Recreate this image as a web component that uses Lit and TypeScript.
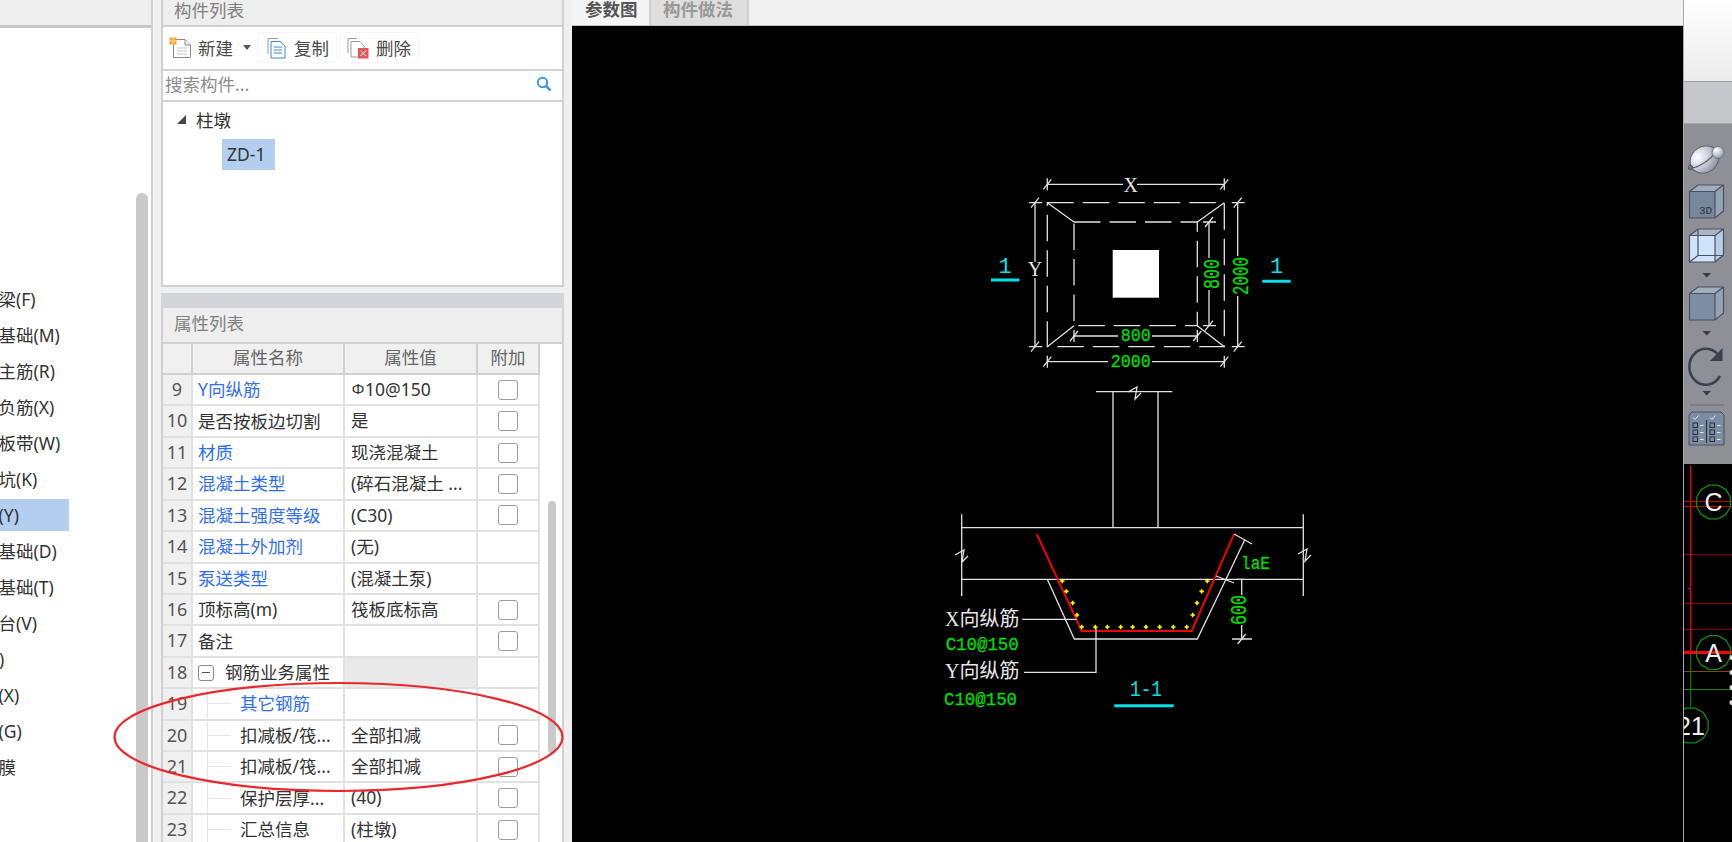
import { LitElement, html, css, svg } from 'lit';
import { customElement } from 'lit/decorators.js';

const FAMILY = css`"Noto Sans", "Noto Sans CJK SC", sans-serif`;

const categories = [
  '基础梁(F)', '筏板基础(M)', '筏板主筋(R)', '筏板负筋(X)', '基础板带(W)', '集水坑(K)', '柱墩(Y)',
  '独立基础(D)', '条形基础(T)', '桩承台(V)', '桩(U)', '垫层(X)', '地沟(G)', '砖胎膜',
];

interface Row {
  n: number;
  name: string;
  value?: string;
  symbol?: string;
  link?: boolean;
  check?: boolean;
  child?: boolean;
  group?: boolean;
}

const rows: Row[] = [
  { n: 9, name: 'Y向纵筋', symbol: 'Φ', value: '10@150', link: true, check: true },
  { n: 10, name: '是否按板边切割', value: '是', check: true },
  { n: 11, name: '材质', value: '现浇混凝土', link: true, check: true },
  { n: 12, name: '混凝土类型', value: '(碎石混凝土 ...', link: true, check: true },
  { n: 13, name: '混凝土强度等级', value: '(C30)', link: true, check: true },
  { n: 14, name: '混凝土外加剂', value: '(无)', link: true },
  { n: 15, name: '泵送类型', value: '(混凝土泵)', link: true },
  { n: 16, name: '顶标高(m)', value: '筏板底标高', check: true },
  { n: 17, name: '备注', check: true },
  { n: 18, name: '钢筋业务属性', group: true },
  { n: 19, name: '其它钢筋', link: true, child: true },
  { n: 20, name: '扣减板/筏...', value: '全部扣减', child: true, check: true },
  { n: 21, name: '扣减板/筏...', value: '全部扣减', child: true, check: true },
  { n: 22, name: '保护层厚...', value: '(40)', child: true, check: true },
  { n: 23, name: '汇总信息', value: '(柱墩)', child: true, check: true },
];

// short CAD slash tick
const tick = (x: number, y: number) => svg`<line class="w" x1=${x - 4} y1=${y + 5} x2=${x + 4} y2=${y - 5} />`;

// horizontal dimension, gap leaves room for the label
const hDim = (x1: number, x2: number, y: number, g1: number, g2: number) => svg`
  <path class="w" d="M${x1} ${y}H${g1}M${g2} ${y}H${x2}M${x1} ${y - 6}V${y + 6}M${x2} ${y - 6}V${y + 6}" />
  ${tick(x1, y)}${tick(x2, y)}`;

const vDim = (x: number, y1: number, y2: number, g1: number, g2: number) => svg`
  <path class="w" d="M${x} ${y1}V${g1}M${x} ${g2}V${y2}M${x - 6} ${y1}H${x + 7}M${x - 6} ${y2}H${x + 7}" />
  ${tick(x, y1)}${tick(x, y2)}`;

const breakMark = (x: number, y: number) => svg`
  <path class="w" d="M${x - 6} ${y + 1}L${x + 3} ${y - 4}L${x + 1} ${y + 8}L${x + 7} ${y + 2}" />`;

const dots: [number, number][] = [
  [427, 603], [439, 634], [458, 669], [471, 705], [485, 741], [526, 741], [562, 741], [602, 741], [638, 741],
  [678, 741], [719, 741], [760, 741], [800, 741], [818, 705], [831, 669], [845, 634], [862, 603],
];

@customElement('cad-drawing')
export class CadDrawing extends LitElement {
  static styles = css`
    :host {
      display: block;
      flex: 1;
      min-height: 0;
      background: #000;
    }
    svg {
      display: block;
    }
    .w {
      stroke: #e2e2e2;
      stroke-width: 1.3;
      fill: none;
    }
    .dash {
      stroke-dasharray: 26.5 9;
    }
    .cyan-line {
      stroke: #00e1e8;
      stroke-width: 3;
    }
    text {
      font-family: "Liberation Mono", "Noto Sans CJK SC", monospace;
      font-size: 19px;
      text-anchor: middle;
      dominant-baseline: central;
    }
    .g {
      fill: #00dd00;
      stroke: #00dd00;
      stroke-width: 0.3;
    }
    .t {
      fill: #e6e6e6;
      font-family: "Liberation Serif", serif;
      font-size: 20px;
    }
    .c {
      fill: #00e1e8;
      font-size: 22px;
    }
    .label {
      fill: #e6e6e6;
      font-family: "Liberation Serif", "Noto Sans CJK SC", serif;
      font-size: 20px;
      text-anchor: start;
    }
    .start {
      text-anchor: start;
    }
  `;

  render() {
    return html`
      <svg width="1111" height="816" viewBox="572 26 1111 816">
        <!-- plan -->
        <rect class="w dash" x="1047.3" y="202.7" width="177" height="144" />
        <rect class="w dash" x="1074" y="222" width="123.3" height="103.7" />
        <path class="w" d="M1047.3 202.7L1074 222M1224.3 202.7L1197.3 222M1047.3 346.7L1074 325.7M1224.3 346.7L1197.3 325.7" />
        <rect x="1112.7" y="250" width="46.3" height="47.7" fill="#fff" />
        ${hDim(1047.3, 1224.3, 184.3, 1123, 1137)}
        ${hDim(1047.3, 1224.3, 361.7, 1108, 1152)}
        ${hDim(1074, 1197.3, 336, 1118, 1152)}
        ${vDim(1035, 202.7, 346.7, 262, 278)}
        ${vDim(1237.7, 202.7, 346.7, 256, 296)}
        ${vDim(1209, 222, 325.7, 258, 290)}
        <text class="t" x="1130.7" y="184.5">X</text>
        <text class="t" x="1035" y="269">Y</text>
        <text class="g" x="1130.7" y="361.5" textLength="40" lengthAdjust="spacingAndGlyphs">2000</text>
        <text class="g" x="1135.7" y="336" textLength="30" lengthAdjust="spacingAndGlyphs">800</text>
        <text class="g" transform="translate(1241.7 276) rotate(-90) scale(1 1.2)" textLength="38" lengthAdjust="spacingAndGlyphs">2000</text>
        <text class="g" transform="translate(1212.7 274) rotate(-90) scale(1 1.2)" textLength="30" lengthAdjust="spacingAndGlyphs">800</text>
        <text class="c" x="1005" y="267">1</text>
        <text class="c" x="1276.7" y="267">1</text>
        <path class="cyan-line" d="M991 280H1019.3M1262.3 281.3H1290.7" />

        <!-- section 1-1 -->
        <path class="w" d="M1096 391.7H1172.3M1113 391.7V527.7M1158 391.7V527.7" />
        ${breakMark(1134, 391)}
        <path class="w" d="M961.7 527.7H1303.3M961.7 579.3H1303.3M961.7 514.3V596M1303.3 514.3V596" />
        ${breakMark(961, 554)}${breakMark(1304, 553)}
        <path class="w" d="M1047.3 579.3L1074.3 639H1197.3L1226 579.3" />
        <path d="M1036.7 534L1081.7 631H1191.7L1234 534" stroke="#f00000" stroke-width="2" fill="none" />
        ${dots.map(([x, y]) => svg`<path d="M${920 + x / 3 - 2.2} ${380 + y / 3}H${920 + x / 3 + 2.2}M${920 + x / 3} ${380 + y / 3 - 2.2}V${380 + y / 3 + 2.2}" stroke="#ffff00" stroke-width="1.6" />`)}
        <path class="w" d="M1245 539.3L1226 579.3M1234 534L1252 544M1216 576L1234 583" />
        <path class="w" d="M1241.7 579.3V595M1241.7 625V639M1232 639H1252M1236 579.3H1244" />
        ${tick(1241.7, 639)}
        <text class="g start" x="1241" y="563.5" textLength="29" lengthAdjust="spacingAndGlyphs">laE</text>
        <text class="g" transform="translate(1240 610) rotate(-90) scale(1 1.2)" textLength="30" lengthAdjust="spacingAndGlyphs">600</text>
        <path class="w" d="M1022.3 619.3H1076.7M1024 672.3H1096V628" />
        <text class="label" x="945" y="619.3">X向纵筋</text>
        <text class="g start" x="945.7" y="645" textLength="73" lengthAdjust="spacingAndGlyphs">C10@150</text>
        <text class="label" x="945" y="670.7">Y向纵筋</text>
        <text class="g start" x="944" y="700" textLength="73" lengthAdjust="spacingAndGlyphs">C10@150</text>
        <text class="c" x="1146" y="690.7" textLength="32" lengthAdjust="spacingAndGlyphs">1-1</text>
        <path class="cyan-line" d="M1114.3 705.7H1173.7" />
      </svg>
    `;
  }
}

const hexagon = (cx: number, cy: number, r: number) => {
  const pts = Array.from({ length: 12 }, (_, i) => {
    const a = (Math.PI / 6) * i + Math.PI / 12;
    return `${(cx + r * Math.cos(a)).toFixed(1)},${(cy + r * Math.sin(a)).toFixed(1)}`;
  });
  return svg`<polygon points=${pts.join(' ')} fill="none" stroke="#0b8a0b" stroke-width="1.3" />`;
};

const cube = (y: number, front: string, top: string, side: string) => svg`
  <path d="M1689.5 ${y + 6.5}L1698 ${y}H1723.5L1715 ${y + 6.5}Z" fill=${top} />
  <path d="M1715 ${y + 6.5}L1723.5 ${y}V${y + 26}L1715 ${y + 33}Z" fill=${side} />
  <rect x="1689.5" y=${y + 6.5} width="25.5" height="26.5" fill=${front} />
  <path d="M1689.5 ${y + 6.5}L1698 ${y}H1723.5V${y + 26}L1715 ${y + 33}H1689.5ZM1689.5 ${y + 6.5}H1715V${y + 33}M1715 ${y + 6.5}L1723.5 ${y}"
    fill="none" stroke="#465263" stroke-width="1.2" />`;

const drop = (y: number) => svg`<path d="M1702.5 ${y - 2}H1711L1706.7 ${y + 2.5}Z" fill="#343c49" />`;

const checkColumn = (x: number) => svg`
  <path d="M${x} 416.5l2 2 3.5-4" fill="none" stroke="#e6ebf2" stroke-width="1" />
  ${[422, 429, 436].map(
    (y) => svg`<rect x=${x} y=${y} width="4.5" height="4.5" fill="none" stroke="#2c3442" /><path d="M${x + 7} ${y + 2.5}h3.5" stroke="#e6ebf2" />`
  )}`;

@customElement('side-strip')
export class SideStrip extends LitElement {
  static styles = css`
    :host {
      display: flex;
      flex-direction: column;
      width: 49px;
      flex: none;
      border-left: 1px solid #a9a9a9;
      box-sizing: border-box;
    }
    .top {
      height: 82px;
      box-sizing: border-box;
      background: linear-gradient(#fff, #ececec);
      border-bottom: 1px solid #9b9b9b;
    }
    .band {
      height: 41px;
      background: #c7c8cc;
    }
    .tools {
      height: 341px;
      background: #8f9095;
      border-top: 1px solid #a9aaae;
      box-sizing: border-box;
    }
    .view {
      flex: 1;
      min-height: 0;
      background: #000;
    }
    svg {
      display: block;
    }
    .label {
      fill: #f2f2f2;
      font-family: "Liberation Sans", sans-serif;
      font-size: 25px;
      text-anchor: middle;
      dominant-baseline: central;
    }
  `;

  render() {
    return html`
      <div class="top"></div>
      <div class="band"></div>
      <div class="tools">
        <svg width="48" height="340" viewBox="1684 123 48 340">
          <defs>
            <radialGradient id="ball" cx="0.35" cy="0.28" r="0.85">
              <stop offset="0" stop-color="#fff" />
              <stop offset="0.5" stop-color="#c5cad2" />
              <stop offset="1" stop-color="#7a828e" />
            </radialGradient>
          </defs>
          <ellipse cx="1704.5" cy="158.5" rx="15" ry="13" transform="rotate(-35 1704.5 158.5)" fill="url(#ball)" stroke="#5d6571" />
          <path d="M1689 167C1697 168 1712 158 1715 151" fill="none" stroke="#5d6571" stroke-width="1.3" />
          <circle cx="1718" cy="151.5" r="6" fill="url(#ball)" stroke="#6b737f" />
          <circle cx="1690.5" cy="166.5" r="2.2" fill="none" stroke="#4d5562" />
          ${cube(184, '#77879c', '#a3aebd', '#95a3b5')}
          <text x="1705.5" y="213" fill="#2b3340" font-size="11" font-family="Liberation Mono, monospace" text-anchor="middle">3D</text>
          ${cube(228, '#cfe3fb', '#a9b5c4', '#b9cde4')}
          <path d="M1698 228V254.5M1698 254.5H1723.5M1698 254.5L1689.5 261" fill="none" stroke="#465263" stroke-width="1.2" />
          ${drop(274)}
          ${cube(286, '#7d8da3', '#a3aebd', '#95a3b5')}
          ${drop(332)}
          <path d="M1720 356.5A16.5 18 0 1 0 1720 375" fill="none" stroke="#3a4250" stroke-width="2.6" />
          <path d="M1722.5 347V360H1710Z" fill="#3a4250" />
          ${drop(392)}
          <path d="M1690 404H1724" stroke="#6b6c70" stroke-width="1" />
          <path d="M1692 411H1721L1724 414V444H1689V414Z" fill="#7c8ca2" stroke="#465263" />
          <path d="M1706.5 419V442" stroke="#2c3442" stroke-width="1.2" />
          ${checkColumn(1693)}${checkColumn(1710)}
        </svg>
      </div>
      <div class="view">
        <svg width="48" height="379" viewBox="1684 464 48 378">
          <path d="M1684 501H1732M1684 506H1732" stroke="#c40000" />
          <path d="M1684 554H1732M1684 603H1732M1684 629H1732" stroke="#8d0000" />
          <path d="M1684 652H1732" stroke="#ff0000" stroke-width="3" />
          <path d="M1684 671H1732" stroke="#7a4a00" />
          <path d="M1684 689H1732M1690.7 653V707" stroke="#0b8a0b" />
          <path d="M1690.7 465V653" stroke="#e00000" stroke-width="1.5" />
          <rect x="1688.5" y="587" width="2" height="2" fill="#9000c0" />
          ${hexagon(1713.5, 501.5, 17.5)}
          ${hexagon(1713.5, 652, 17.5)}
          ${hexagon(1690.7, 725, 18)}
          <text class="label" x="1713.5" y="501.5">C</text>
          <text class="label" x="1713.5" y="652">A</text>
          <text class="label" x="1691" y="725">21</text>
          ${[657, 672, 687, 702].map((y) => svg`<circle cx="1732" cy=${y} r="2.5" fill="#ddd" />`)}
        </svg>
      </div>
    `;
  }
}

@customElement('app-root')
export class AppRoot extends LitElement {
  static styles = css`
    :host {
      display: flex;
      position: relative;
      width: 1732px;
      height: 842px;
      overflow: hidden;
      background: #f0f0f0;
      font-family: ${FAMILY};
      font-size: 17.5px;
      color: #333;
    }
    svg {
      display: block;
    }

    /* left category list */
    .nav {
      width: 153px;
      flex: none;
      box-sizing: border-box;
      border-right: 2px solid #d0d0d0;
      display: flex;
      flex-direction: column;
    }
    .nav-head {
      height: 28px;
      flex: none;
      box-sizing: border-box;
      background: #eee;
      border-bottom: 3px solid #c6c6c6;
    }
    .nav-body {
      flex: 1;
      min-height: 0;
      background: #fff;
      display: flex;
    }
    .nav-list {
      width: 136px;
      flex: none;
      padding-top: 253px;
      overflow: hidden;
    }
    .nav-item {
      width: 69px;
      height: 36px;
      line-height: 36px;
      white-space: nowrap;
    }
    .nav-item span {
      margin-left: -36.5px;
    }
    .nav-item.on {
      background: #b3ceee;
      height: 32px;
      line-height: 32px;
      margin-top: 2px;
      margin-bottom: 2px;
    }
    .nav-thumb {
      width: 12px;
      margin-top: 165px;
      background: #c9c9c9;
      border-radius: 6px 6px 0 0;
    }

    /* middle panel */
    .panel {
      width: 403px;
      flex: none;
      margin: 0 8px;
      display: flex;
      flex-direction: column;
    }
    .title {
      flex: none;
      box-sizing: border-box;
      padding-left: 11px;
      background: #eee;
      color: #808080;
      border: solid #d0d0d0;
      border-width: 0 2px;
    }
    .title.list {
      height: 25px;
      line-height: 20px;
    }
    .title.props {
      height: 34px;
      line-height: 30px;
    }
    .boxed {
      flex: none;
      box-sizing: border-box;
      background: #fff;
      border: solid #d0d0d0;
      border-width: 2px 2px 0;
    }
    .toolbar {
      height: 44px;
      padding: 5px 0 0 6px;
      display: flex;
      align-items: flex-start;
      color: #4a4a4a;
    }
    .new {
      height: 31px;
      display: flex;
      align-items: center;
      gap: 6px;
      width: 88px;
    }
    .tool {
      width: 80px;
      height: 31px;
      margin-right: 3px;
      box-sizing: border-box;
      border: 1px solid #f6f6f6;
      border-radius: 4px;
      display: flex;
      align-items: center;
      gap: 8px;
      padding-left: 9px;
    }
    .tool.del {
      padding-left: 6px;
      gap: 7px;
    }
    .caret {
      width: 0;
      height: 0;
      margin-left: 4px;
      border: 4px solid transparent;
      border-top: 5px solid #555;
      border-bottom: 0;
    }
    .search {
      height: 31px;
      padding: 0 10px 4px 2px;
      display: flex;
      align-items: center;
      justify-content: space-between;
      color: #8c8c8c;
    }
    .tree {
      height: 187px;
      border-bottom-width: 2px;
      padding-left: 14px;
    }
    .tree-root {
      display: flex;
      align-items: center;
      gap: 10px;
      height: 34px;
    }
    .tree-arrow {
      width: 0;
      height: 0;
      border-style: solid;
      border-width: 0 0 9px 9px;
      border-color: transparent transparent #444 transparent;
    }
    .tree-leaf {
      width: 53px;
      height: 31px;
      line-height: 31px;
      margin: 3px 0 0 45px;
      box-sizing: border-box;
      padding-left: 5px;
      background: #b3ceee;
    }
    .spacer {
      height: 6px;
      flex: none;
    }
    .gray-bar {
      height: 15px;
      flex: none;
      background: #d4d5d9;
    }
    .props-body {
      flex: 1;
      min-height: 0;
      box-sizing: border-box;
      background: #fff;
      border: solid #d0d0d0;
      border-width: 2px 2px 0;
      display: flex;
    }

    /* property grid */
    .grid {
      width: 377px;
      flex: none;
    }
    .row {
      display: grid;
      grid-template-columns: 30px 152px 133px 62px;
      height: 31.43px;
      box-sizing: border-box;
      border-bottom: 2px solid #e1e1e1;
      line-height: 29px;
      white-space: nowrap;
    }
    .row > div {
      box-sizing: border-box;
      border-right: 2px solid #e1e1e1;
      overflow: hidden;
    }
    .row.head {
      height: 31px;
      background: #f0f0f0;
      color: #666;
      text-align: center;
      line-height: 27px;
      border-bottom-color: #d0d0d0;
    }
    .row.head > div {
      border-right-color: #d0d0d0;
    }
    .num {
      background: #f0f0f0;
      text-align: center;
      color: #555;
      font-size: 18px;
    }
    .name {
      padding-left: 5px;
      display: flex;
      align-items: center;
    }
    .name.link {
      color: #2f6fee;
    }
    .value {
      padding-left: 6px;
    }
    .value.shaded {
      background: #e9e9e9;
    }
    .bar-symbol {
      display: inline-block;
      width: 14px;
      font-size: 15px;
      text-align: center;
      transform: translateY(-2px);
    }
    .extra {
      display: flex;
      align-items: center;
      justify-content: center;
    }
    .check {
      width: 20px;
      height: 20px;
      box-sizing: border-box;
      border: 1.5px solid #9a9a9a;
      border-radius: 3px;
      background: #fff;
    }
    .minus {
      width: 16px;
      height: 16px;
      box-sizing: border-box;
      border: 1px solid #888;
      border-radius: 3px;
      margin-right: 11px;
      position: relative;
    }
    .minus::after {
      content: '';
      position: absolute;
      left: 3px;
      right: 3px;
      top: 6px;
      height: 1.5px;
      background: #555;
    }
    .branch {
      width: 24px;
      height: 100%;
      margin: 0 9px 0 9px;
      flex: none;
      background:
        linear-gradient(#e6e6e6, #e6e6e6) 0 0 / 1px 100% no-repeat,
        linear-gradient(#e6e6e6, #e6e6e6) 0 50% / 100% 1px no-repeat;
    }
    .grid-gutter {
      flex: 1;
      padding: 157px 6px 0 8px;
    }
    .grid-thumb {
      height: 252px;
      background: #c9c9c9;
      border-radius: 6px;
    }

    /* right drawing pane */
    .stage {
      flex: 1;
      min-width: 0;
      display: flex;
      flex-direction: column;
    }
    .tabs {
      height: 26px;
      flex: none;
      display: flex;
      box-sizing: border-box;
      border-bottom: 1px solid #c0c0c0;
      line-height: 18px;
    }
    .tab {
      box-sizing: border-box;
      padding-left: 13px;
      border-right: 2px solid #cfcfcf;
      font-weight: 700;
      color: #555;
      background: #f5f5f5;
      width: 79px;
    }
    .tab.off {
      width: 98px;
      background: #dedede;
      color: #999;
      padding-left: 12px;
    }

    /* hand drawn mark on top of the grid */
    .mark {
      position: absolute;
      left: 112px;
      top: 681px;
      pointer-events: none;
    }
  `;

  private renderRow(r: Row) {
    return html`
      <div class="row">
        <div class="num">${r.n}</div>
        <div class="name ${r.link ? 'link' : ''}">
          ${r.group ? html`<span class="minus"></span>` : ''}
          ${r.child ? html`<span class="branch"></span>` : ''}
          <span>${r.name}</span>
        </div>
        <div class="value ${r.group ? 'shaded' : ''}">
          ${r.symbol ? html`<span class="bar-symbol">${r.symbol}</span>` : ''}${r.value ?? ''}
        </div>
        <div class="extra">${r.check ? html`<span class="check"></span>` : ''}</div>
      </div>
    `;
  }

  render() {
    return html`
      <aside class="nav">
        <div class="nav-head"></div>
        <div class="nav-body">
          <div class="nav-list">
            ${categories.map(
              (c) => html`<div class="nav-item ${c === '柱墩(Y)' ? 'on' : ''}"><span>${c}</span></div>`
            )}
          </div>
          <div class="nav-thumb"></div>
        </div>
      </aside>

      <section class="panel">
        <div class="title list">构件列表</div>
        <div class="boxed toolbar">
          <div class="new">
            <svg width="23" height="22" viewBox="0 0 23 22">
              <path d="M4.5 2.5H16L21.5 8V20.5H4.5Z" fill="#fff" stroke="#8a8a8a" />
              <path d="M16 2.5V8H21.5" fill="#eee" stroke="#8a8a8a" />
              <path d="M8 11H18M8 14H18M8 17H18" stroke="#c4c4c4" />
              <rect x="0.5" y="0.5" width="7" height="7" fill="#f7a32c" />
              <path d="M4 1V7M1 4H7" stroke="#ffe3b0" />
            </svg>
            <span>新建</span>
            <i class="caret"></i>
          </div>
          <div class="tool">
            <svg width="19" height="22" viewBox="0 0 19 22">
              <path d="M1 17V1.5H11" fill="none" stroke="#9a9a9a" />
              <path d="M4 4.5H13L18 9V21H4Z" fill="#fff" stroke="#3c86d2" />
              <path d="M7 10H15M7 13H15M7 16H15" stroke="#3c86d2" />
            </svg>
            <span>复制</span>
          </div>
          <div class="tool del">
            <svg width="22" height="22" viewBox="0 0 22 22">
              <path d="M1 16V1.5H10" fill="none" stroke="#9a9a9a" />
              <path d="M4 4.5H13L17 9V20H4Z" fill="#fff" stroke="#9a9a9a" />
              <rect x="11" y="11" width="10.5" height="10.5" fill="#e0565b" />
              <path d="M13.5 13.5L19 19M19 13.5L13.5 19" stroke="#fff" />
            </svg>
            <span>删除</span>
          </div>
        </div>
        <div class="boxed search">
          <span>搜索构件...</span>
          <svg width="16" height="16" viewBox="0 0 16 16">
            <circle cx="6.5" cy="6.5" r="4.7" fill="none" stroke="#3d9ad9" stroke-width="2" />
            <path d="M10 10L14.5 14.5" stroke="#3d9ad9" stroke-width="2.5" />
          </svg>
        </div>
        <div class="boxed tree">
          <div class="tree-root"><i class="tree-arrow"></i><span>柱墩</span></div>
          <div class="tree-leaf">ZD-1</div>
        </div>
        <div class="spacer"></div>
        <div class="gray-bar"></div>
        <div class="title props">属性列表</div>
        <div class="props-body">
          <div class="grid">
            <div class="row head">
              <div></div>
              <div>属性名称</div>
              <div>属性值</div>
              <div>附加</div>
            </div>
            ${rows.map((r) => this.renderRow(r))}
          </div>
          <div class="grid-gutter"><div class="grid-thumb"></div></div>
        </div>
      </section>

      <main class="stage">
        <div class="tabs">
          <div class="tab">参数图</div>
          <div class="tab off">构件做法</div>
        </div>
        <cad-drawing></cad-drawing>
      </main>

      <side-strip></side-strip>

      <svg class="mark" width="454" height="114" viewBox="0 0 454 114">
        <ellipse cx="226.5" cy="56" rx="224" ry="54" fill="none" stroke="#e8282c" stroke-width="2.2" />
      </svg>
    `;
  }
}
